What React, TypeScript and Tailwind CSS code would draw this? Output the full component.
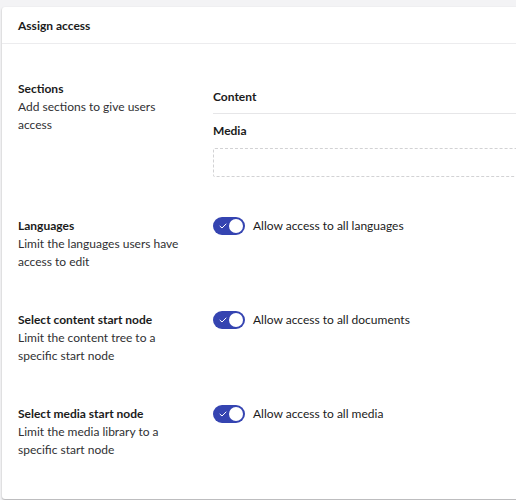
import React from 'react';

const Toggle: React.FC = () => (
  <span className="relative inline-flex h-[18px] w-[32px] shrink-0 items-center rounded-full bg-[#3544b1]">
    <svg className="absolute left-[6px] top-[5px] h-[8px] w-[8px]" viewBox="0 0 8 8" fill="none">
      <path d="M1 4.2 L3 6 L7 2" stroke="white" strokeWidth="1" strokeLinecap="round" strokeLinejoin="round" />
    </svg>
    <span className="absolute right-[2px] top-[2px] h-[14px] w-[14px] rounded-full bg-white" />
  </span>
);

const Row: React.FC<{ title: string; description: string; children: React.ReactNode }> = ({ title, description, children }) => (
  <div className="grid grid-cols-[165px_1fr] gap-x-[30px]">
    <div className="leading-[18px]">
      <div className="text-[12px] font-bold text-[#1b1b1b]">{title}</div>
      <div className="text-[12px] text-[#303033]">{description}</div>
    </div>
    <div>{children}</div>
  </div>
);

export default function App() {
  return (
    <div className="h-[500px] w-[516px] overflow-hidden bg-[#f3f3f5] pl-[2px] pt-[7px] font-['Lato',sans-serif]">
      <div className="w-[540px] rounded-[3px] bg-white shadow-[0_1px_2px_rgba(0,0,0,0.3)]">
        {/* Header */}
        <div className="flex h-[37px] items-center border-b border-[#ececee] px-[16px] pt-[2px]">
          <h2 className="text-[12px] font-bold text-[#1b1b1b]">Assign access</h2>
        </div>

        <div className="flex flex-col gap-[40px] px-[16px] pb-[40px] pt-[36px]">
          <Row title="Sections" description="Add sections to give users access">
            <div className="flex h-[34px] items-center border-b border-[#e6e6e8] text-[12px] font-bold text-[#1b1b1b]">Content</div>
            <div className="flex h-[34px] items-center text-[12px] font-bold text-[#1b1b1b]">Media</div>
            <div className="h-[29px] rounded-[2px] border border-dashed border-[#d2d2d4]" />
          </Row>

          <Row title="Languages" description="Limit the languages users have access to edit">
            <div className="flex items-center gap-[8px] leading-[18px]">
              <Toggle />
              <span className="text-[12px] text-[#1b1b1b]">Allow access to all languages</span>
            </div>
          </Row>

          <Row title="Select content start node" description="Limit the content tree to a specific start node">
            <div className="flex items-center gap-[8px] leading-[18px]">
              <Toggle />
              <span className="text-[12px] text-[#1b1b1b]">Allow access to all documents</span>
            </div>
          </Row>

          <Row title="Select media start node" description="Limit the media library to a specific start node">
            <div className="flex items-center gap-[8px] leading-[18px]">
              <Toggle />
              <span className="text-[12px] text-[#1b1b1b]">Allow access to all media</span>
            </div>
          </Row>
        </div>
      </div>
    </div>
  );
}
